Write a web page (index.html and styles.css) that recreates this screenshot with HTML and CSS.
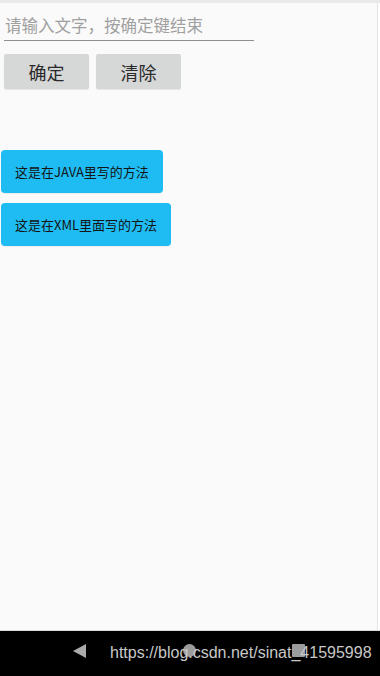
FILE: index.html
```html
<!DOCTYPE html>
<html lang="zh">
<head>
<meta charset="utf-8">
<title>Demo</title>
<link rel="stylesheet" href="styles.css">
</head>
<body>
<div class="device">
  <div class="statusstrip"></div>
  <main class="screen">
    <div class="field">
      <span class="placeholder">请输入文字，按确定键结束</span>
    </div>
    <div class="actions">
      <button class="btn-grey">确定</button>
      <button class="btn-grey">清除</button>
    </div>
    <div class="list">
      <div class="chip">这是在JAVA里写的方法</div>
      <div class="chip">这是在XML里面写的方法</div>
    </div>
  </main>
  <nav class="navbar">
    <div class="navicons">
      <svg class="ic-back" width="13" height="14" viewBox="0 0 13 14"><polygon points="13,0 13,14 0,7" fill="#ababab"/></svg>
      <span class="ic-home"></span>
      <span class="ic-recent"></span>
    </div>
    <span class="watermark">https://blog.csdn.net/sinat_41595998</span>
  </nav>
</div>
</body>
</html>
```
FILE: styles.css
```css
html, body {
  margin: 0;
  padding: 0;
  background: #ffffff;
}
.device {
  width: 380px;
  height: 676px;
  display: flex;
  flex-direction: column;
  font-family: "Noto Sans CJK SC", "Noto Sans", sans-serif;
}
.statusstrip {
  height: 3px;
  background: #e9e9ea;
}
.screen {
  flex: 1;
  width: 378px;
  background: #fafafa;
  border-right: 1px solid #e4e4e4;
  display: flex;
  flex-direction: column;
  box-sizing: border-box;
}
.field {
  margin: 12px 0 0 4px;
  width: 250px;
  height: 25px;
  border-bottom: 1px solid #8f8f8f;
  display: flex;
  align-items: flex-start;
}
.placeholder {
  font-size: 16.5px;
  line-height: 20px;
  color: #a0a0a0;
  padding-left: 1px;
}
.actions {
  display: flex;
  gap: 7px;
  margin: 13px 0 0 4px;
}
.btn-grey {
  width: 85px;
  height: 35px;
  border: none;
  border-radius: 2px;
  background: #d6d7d7;
  color: #2a2a2a;
  font-family: "Noto Sans CJK SC", "Noto Sans", sans-serif;
  font-size: 18px;
  line-height: 20px;
  padding: 0;
  box-shadow: 0 1px 1px rgba(0,0,0,0.08);
}
.list {
  display: flex;
  flex-direction: column;
  align-items: flex-start;
  gap: 10px;
  margin: 61px 0 0 1px;
}
.chip {
  height: 43px;
  display: flex;
  align-items: center;
  padding: 0 14px 0 14px;
  background: #1fbcf3;
  border-radius: 4px;
  color: #141414;
  font-size: 13px;
  box-shadow: 0 1px 1px rgba(0,0,0,0.06);
}
.navbar {
  position: relative;
  height: 45px;
  background: #000000;
  border-top: 1px solid #dcdcdc;
}
.navicons {
  display: flex;
  align-items: center;
  padding-left: 73px;
  height: 100%;
  margin-top: -3px;
}
.ic-back {
  display: block;
}
.ic-home {
  width: 13px;
  height: 13px;
  border-radius: 50%;
  background: #9c9c9c;
  margin-left: 97px;
}
.ic-recent {
  width: 13px;
  height: 13px;
  border-radius: 1px;
  background: #9c9c9c;
  margin-left: 96px;
}
.watermark {
  position: absolute;
  left: 110px;
  top: 13px;
  font-family: "Liberation Sans", Arial, sans-serif;
  font-size: 16px;
  line-height: 18px;
  color: #c8c8c8;
  white-space: nowrap;
}
```
